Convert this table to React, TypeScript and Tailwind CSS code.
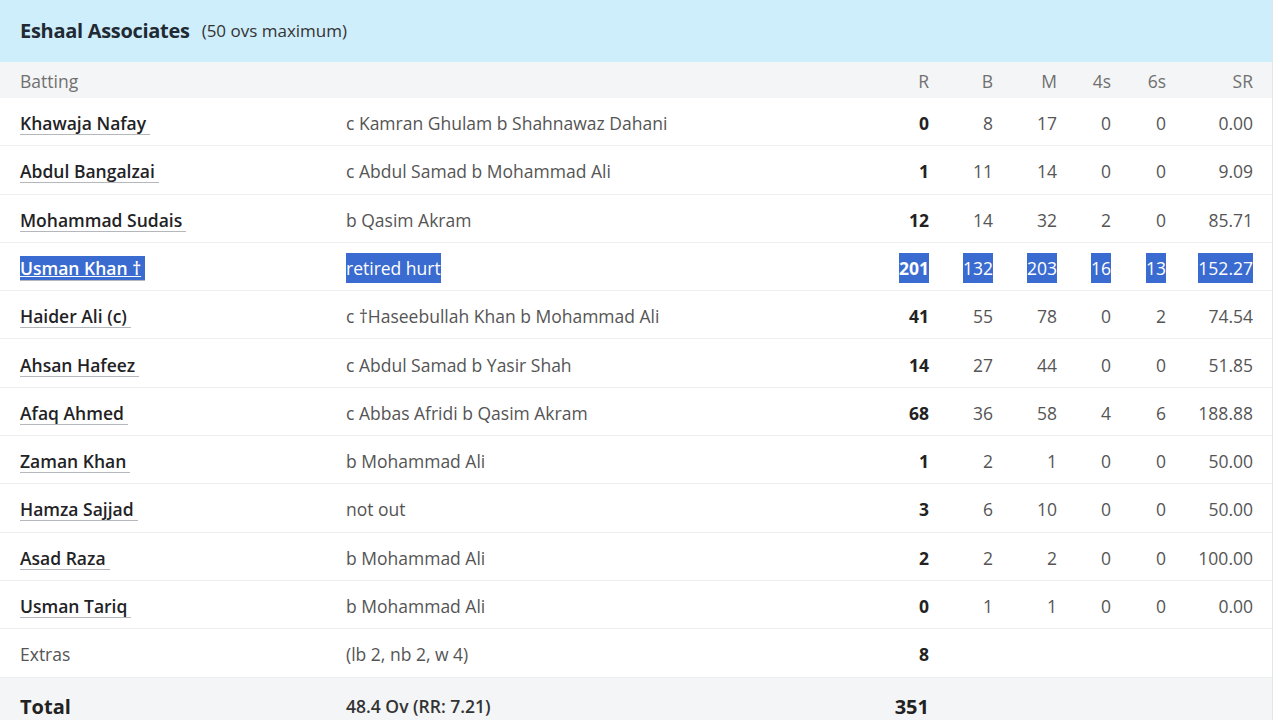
import React from 'react'

interface Batter {
  name: string
  dismissal: string
  r: string
  b: string
  m: string
  fours: string
  sixes: string
  sr: string
  selected?: boolean
}

const batters: Batter[] = [
  { name: 'Khawaja Nafay', dismissal: 'c Kamran Ghulam b Shahnawaz Dahani', r: '0', b: '8', m: '17', fours: '0', sixes: '0', sr: '0.00' },
  { name: 'Abdul Bangalzai', dismissal: 'c Abdul Samad b Mohammad Ali', r: '1', b: '11', m: '14', fours: '0', sixes: '0', sr: '9.09' },
  { name: 'Mohammad Sudais', dismissal: 'b Qasim Akram', r: '12', b: '14', m: '32', fours: '2', sixes: '0', sr: '85.71' },
  { name: 'Usman Khan †', dismissal: 'retired hurt', r: '201', b: '132', m: '203', fours: '16', sixes: '13', sr: '152.27', selected: true },
  { name: 'Haider Ali (c)', dismissal: 'c †Haseebullah Khan b Mohammad Ali', r: '41', b: '55', m: '78', fours: '0', sixes: '2', sr: '74.54' },
  { name: 'Ahsan Hafeez', dismissal: 'c Abdul Samad b Yasir Shah', r: '14', b: '27', m: '44', fours: '0', sixes: '0', sr: '51.85' },
  { name: 'Afaq Ahmed', dismissal: 'c Abbas Afridi b Qasim Akram', r: '68', b: '36', m: '58', fours: '4', sixes: '6', sr: '188.88' },
  { name: 'Zaman Khan', dismissal: 'b Mohammad Ali', r: '1', b: '2', m: '1', fours: '0', sixes: '0', sr: '50.00' },
  { name: 'Hamza Sajjad', dismissal: 'not out', r: '3', b: '6', m: '10', fours: '0', sixes: '0', sr: '50.00' },
  { name: 'Asad Raza', dismissal: 'b Mohammad Ali', r: '2', b: '2', m: '2', fours: '0', sixes: '0', sr: '100.00' },
  { name: 'Usman Tariq', dismissal: 'b Mohammad Ali', r: '0', b: '1', m: '1', fours: '0', sixes: '0', sr: '0.00' },
]

// column grid: name | dismissal | R | B | M | 4s | 6s | SR
const cols = 'grid grid-cols-[346px_1fr_64px_64px_64px_54px_55px_87px] items-center'

function Cell({ children, sel, className }: { children: React.ReactNode; sel?: boolean; className?: string }) {
  return (
    <span className={className}>
      <span className={sel ? 'bg-[#3a6bd0] text-white py-[3px]' : ''}>{children}</span>
    </span>
  )
}

export default function App() {
  return (
    <div
      className="w-[1273px] h-[720px] overflow-hidden bg-white border-r border-[#e4e6e8] text-[#3c3c3c]"
      style={{ fontFamily: '"Open Sans", "Noto Sans", sans-serif' }}
    >
      {/* Title */}
      <div className="h-[62px] bg-[#cfeefc] flex items-center pl-5 gap-3">
        <span className="text-[20px] font-bold text-[#1f2a33] tracking-[-0.3px]">Eshaal Associates</span>
        <span className="text-[17px] text-[#333]">(50 ovs maximum)</span>
      </div>

      {/* Header */}
      <div className={`${cols} h-[36px] bg-[#f4f5f6] text-[17.5px] text-[#707070] pr-[19px] pt-[3px]`}>
        <span className="pl-5">Batting</span>
        <span />
        <span className="text-right">R</span>
        <span className="text-right">B</span>
        <span className="text-right">M</span>
        <span className="text-right">4s</span>
        <span className="text-right">6s</span>
        <span className="text-right">SR</span>
      </div>

      {/* Batters */}
      {batters.map((p) => (
        <div key={p.name} className={`${cols} h-[48.3px] border-b border-[#eceef0] text-[17.5px] pr-[19px] pt-[3px]`}>
          <span className="pl-5">
            <span
              className={`inline-block leading-[22px] font-semibold pr-1 border-b border-[#b4b8bc] ${
                p.selected ? 'bg-[#3a6bd0] text-white underline py-[1px]' : 'text-[#1f2326]'
              }`}
            >
              {p.name}
            </span>
          </span>
          <Cell sel={p.selected} className="text-[#555]">{p.dismissal}</Cell>
          <Cell sel={p.selected} className="text-right font-bold text-[#222]">{p.r}</Cell>
          <Cell sel={p.selected} className="text-right text-[#555]">{p.b}</Cell>
          <Cell sel={p.selected} className="text-right text-[#555]">{p.m}</Cell>
          <Cell sel={p.selected} className="text-right text-[#555]">{p.fours}</Cell>
          <Cell sel={p.selected} className="text-right text-[#555]">{p.sixes}</Cell>
          <Cell sel={p.selected} className="text-right text-[#555]">{p.sr}</Cell>
        </div>
      ))}

      {/* Extras */}
      <div className={`${cols} h-[48.3px] border-b border-[#eceef0] text-[17.5px] pr-[19px] pt-[3px]`}>
        <span className="pl-5 text-[#555]">Extras</span>
        <span className="text-[#555]">(lb 2, nb 2, w 4)</span>
        <span className="text-right font-bold text-[#222]">8</span>
      </div>

      {/* Total */}
      <div className={`${cols} h-[56px] bg-[#f4f5f6] pr-[19px] pt-[2px]`}>
        <span className="pl-5 text-[20px] font-bold text-[#222]">Total</span>
        <span className="text-[17.5px] font-semibold text-[#333]">48.4 Ov (RR: 7.21)</span>
        <span className="text-right text-[20px] font-bold text-[#222]">351</span>
      </div>
    </div>
  )
}
